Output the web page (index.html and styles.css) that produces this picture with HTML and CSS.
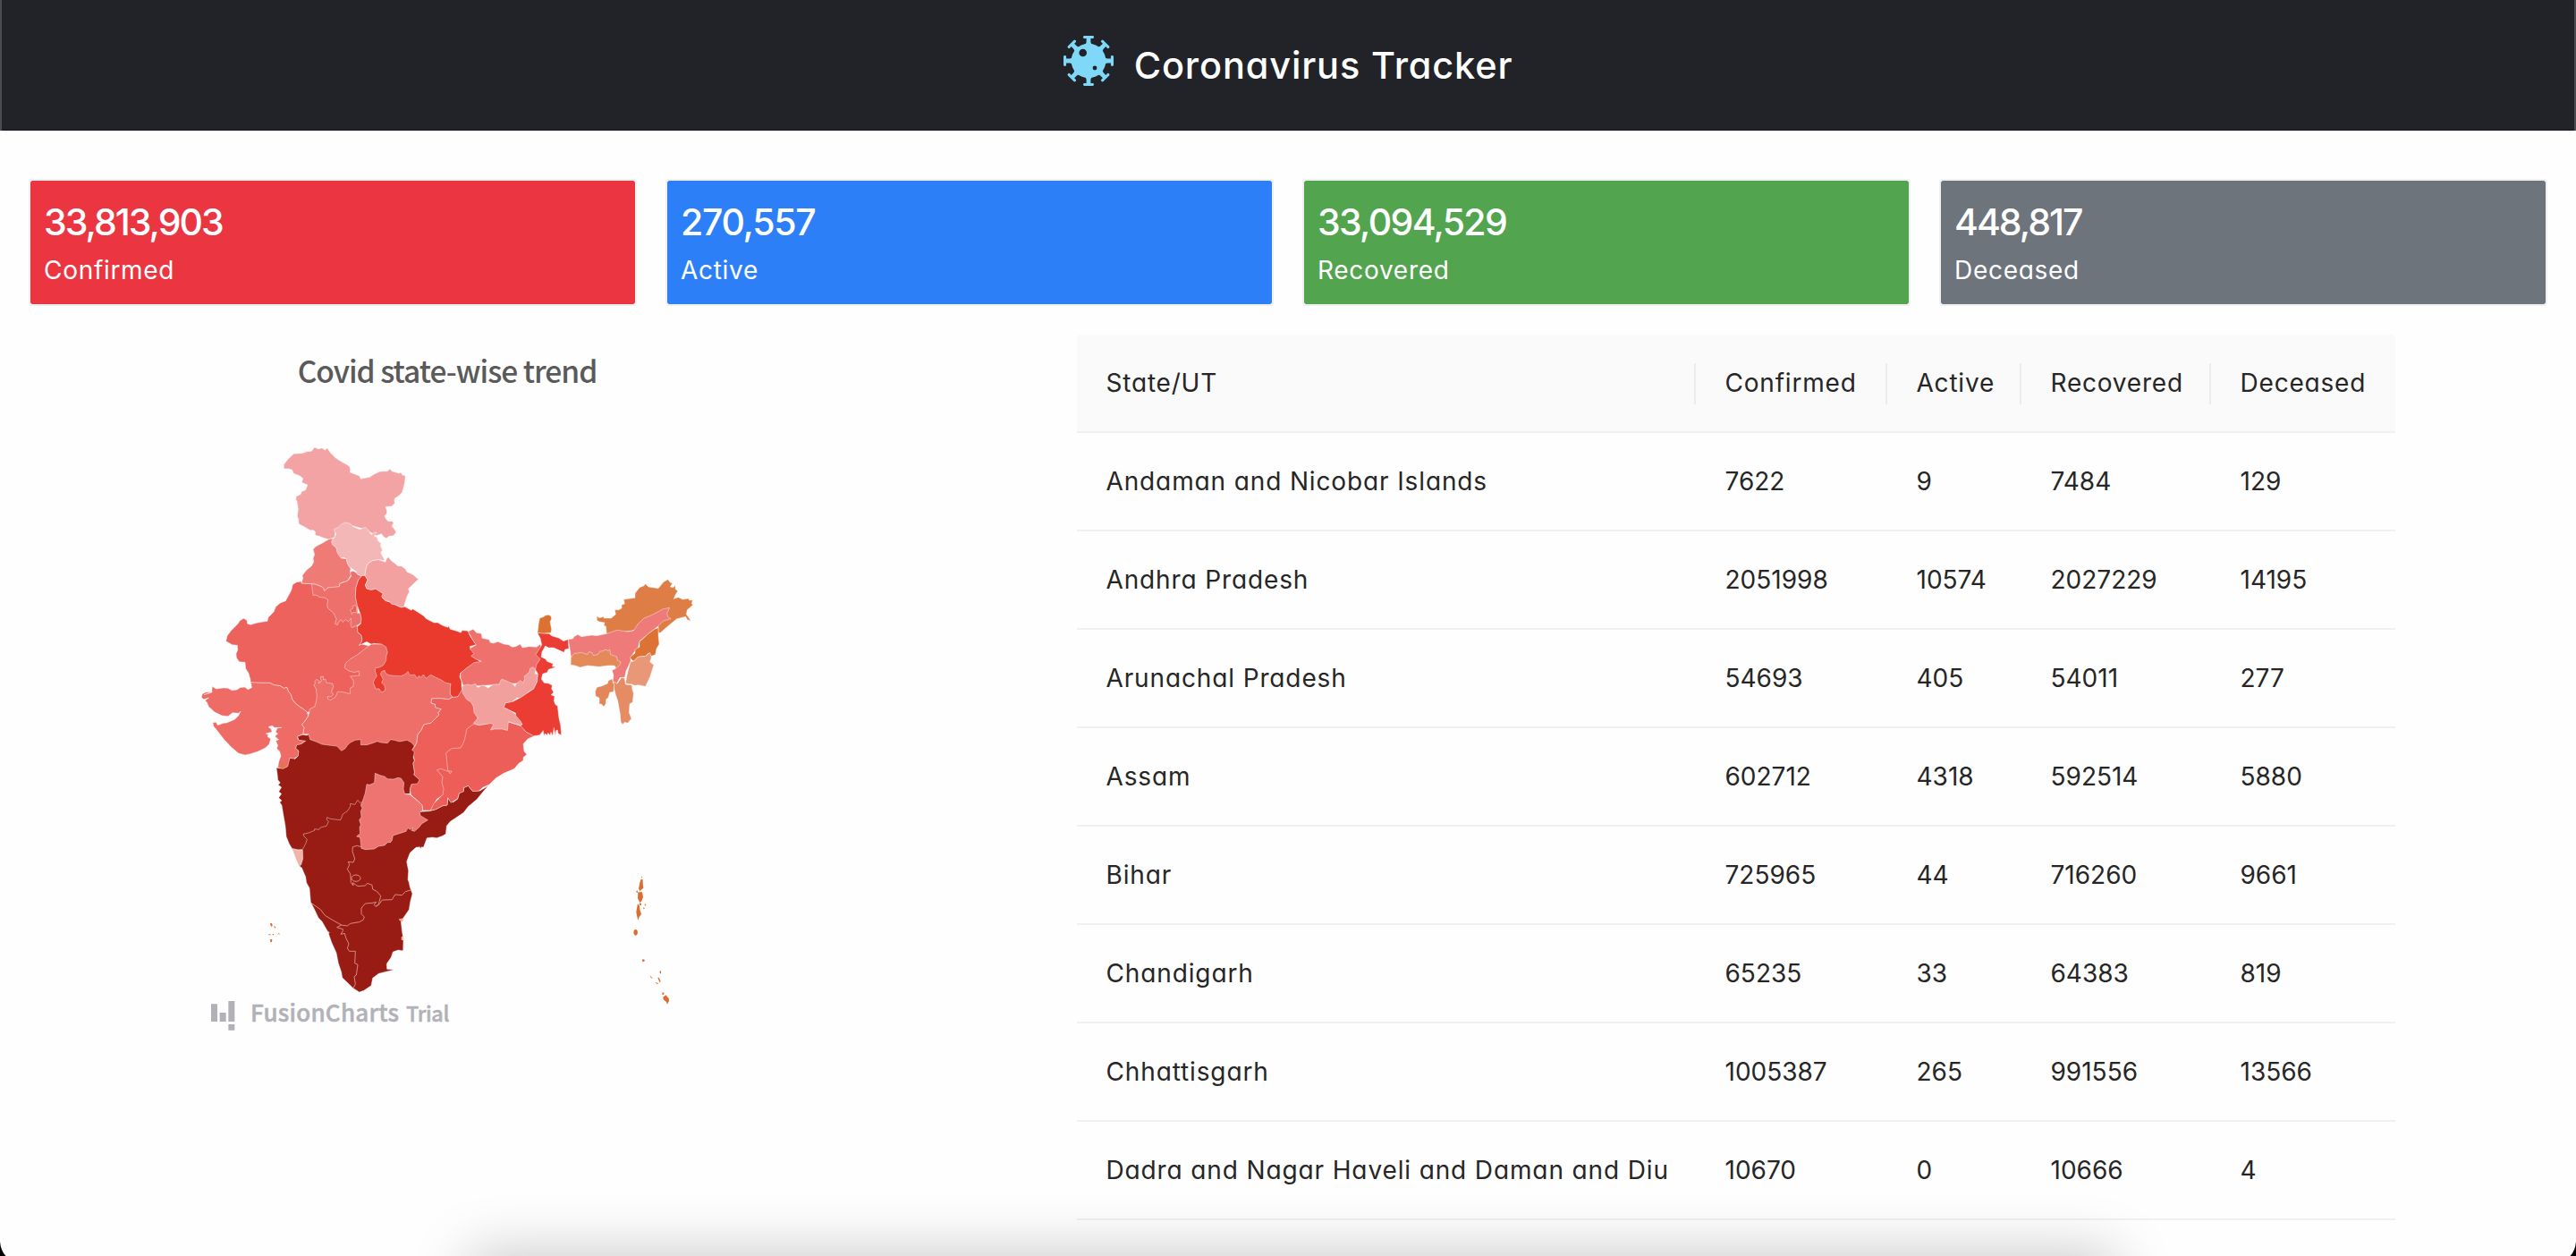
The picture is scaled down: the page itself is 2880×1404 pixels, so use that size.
FILE: index.html
```html
<!DOCTYPE html>
<html lang="en">
<head>
<meta charset="utf-8">
<title>Coronavirus Tracker</title>
<link rel="stylesheet" href="styles.css">
</head>
<body>
<header class="topbar">
  <svg class="logo" viewBox="-28 -28 56 56">
    <defs>
      <path id="spike" d="M-4.6-28h9.2a1.4 1.4 0 0 1 1.4 1.4v.3a1.4 1.4 0 0 1-1.4 1.4H2.4v4Q2.6-18.500 5-17.500h-10Q-2.600-18.500-2.400-20.900v-4h-2.200A1.400 1.400 0 0 1-6-26.300v-.3A1.400 1.400 0 0 1-4.600-28z"/>
      <g id="pair"><use href="#spike"/><use href="#spike" transform="rotate(180)"/></g>
    </defs>
    <g class="virus">
      <use href="#pair"/><use href="#pair" transform="rotate(45)"/><use href="#pair" transform="rotate(90)"/><use href="#pair" transform="rotate(135)"/>
      <circle r="19.300"/>
    </g>
    <circle class="hole" cx="-6.300" cy="-9" r="4.300"/>
    <circle class="hole" cx="7" cy="8" r="2.400"/>
  </svg>
  <h1>Coronavirus Tracker</h1>
</header>

<section class="cards">
  <article class="card confirmed"><strong>33,813,903</strong><span>Confirmed</span></article>
  <article class="card active"><strong>270,557</strong><span>Active</span></article>
  <article class="card recovered"><strong>33,094,529</strong><span>Recovered</span></article>
  <article class="card deceased"><strong>448,817</strong><span>Deceased</span></article>
</section>

<main class="content">
  <section class="chart">
    <h2>Covid state-wise trend</h2>
    <svg class="map" viewBox="0 0 1800 2040">
      <!-- north and west -->
      <g class="state">
        <path fill="#f3a3a3" d="M352,118L366,100 385,82 412,80 428,76 414,68 430,74 445,73 455,60 468,66 480,62 490,70 497,62 508,78 525,95 540,105 556,114 572,124 575,132 574,144 590,150 606,156 610,166 625,163 640,160 655,150 675,141 700,140 708,132 714,140 740,148 744,144 750,153 760,156 757,180 752,200 748,212 735,225 725,230 722,240 725,246 715,257 693,260 698,272 697,283 690,290 694,300 702,308 716,308 720,314 714,325 722,333 729,345 720,356 705,358 696,365 686,360 680,350 662,356 625,335 570,320 525,340 522,362 502,369 485,364 470,358 457,355 458,344 452,338 440,338 420,326 402,317 401,300 397,292 400,268 396,240 392,236 394,224 408,218 412,208 424,204 432,186 412,178 416,164 406,156 385,148 380,136 368,132 352,132Z"/>
        <path fill="#ed625d" d="M411,516L411,510 395,512 382,520 377,540 358,575 340,582 325,595 318,612 300,630 297,643 265,648 240,655 230,652 228,640 217,634 204,642 198,652 175,675 162,692 158,710 178,722 196,724 197,740 192,752 193,765 202,779 222,781 224,802 234,818 240,840 240,848 275,850 305,850 320,857 340,860 352,868 362,865 368,880 375,888 380,905 390,918 405,930 420,940 430,948 640,940 700,740 612,720 605,724 615,708 612,690 600,680 598,662 600,560 445,518Z"/>
        <path fill="#ef7b77" d="M502,369L520,365 512,376 528,397 545,432 562,434 565,448 576,465 574,480 578,488 570,500 566,508 548,513 540,517 538,527 520,531 500,531 490,540 480,528 460,520 445,518 411,516 416,500 414,490 428,472 445,458 452,445 450,432 455,420 450,402 460,392 480,382Z"/>
        <path fill="#ee706c" d="M445,518L460,520 484,530 488,543 500,531 538,527 540,517 566,508 578,492 574,478 585,475 594,480 600,487 613,491 602,505 594,530 592,560 598,590 600,615 608,617 612,632 610,650 598,657 580,665 576,655 578,633 568,645 560,638 550,646 543,638 535,648 532,656 524,652 528,635 518,615 500,600 497,590 500,572 490,565 470,562 462,556 450,556Z"/>
        <path fill="#ef5b56" d="M578,612L575,605 585,600 582,594 590,590 596,594 596,610 600,616 585,612 580,620Z"/>
        <path fill="#f4b7b7" d="M520,335L535,328 545,318 558,312 575,316 585,326 607,335 625,328 634,336 640,345 645,353 655,345 664,345 655,358 665,362 668,374 678,382 676,390 680,398 683,405 677,412 680,420 687,432 690,440 670,437 650,440 636,448 630,458 626,475 624,490 613,491 600,487 594,476 582,468 570,460 565,448 562,434 552,430 545,432 535,420 530,410 528,397 514,386 512,376 520,365 527,352Z"/>
        <path fill="#ee6e69" d="M438,948L438,938 455,930 460,915 463,895 460,870 453,858 458,850 455,845 462,838 472,845 468,852 478,845 475,830 485,828 484,840 492,838 495,850 515,852 518,862 512,880 518,890 510,897 498,896 500,904 508,908 525,898 532,880 548,880 562,884 575,886 574,868 585,862 586,843 575,828 606,825 603,810 590,815 570,810 556,800 558,785 575,770 600,755 625,735 645,720 700,720 912,840 910,888 918,898 905,905 875,902 848,903 846,918 860,922 860,932 880,938 870,950 872,958 855,975 845,985 822,990 812,1010 802,1022 800,1030 798,1050 792,1062 778,1062 600,1072 545,1085 440,1060 434,1022 416,1022 420,1000 412,990 425,975 434,960Z"/>
        <path fill="#ef6b66" d="M240,848L275,850 305,850 320,857 340,860 352,868 362,865 368,880 375,888 380,905 390,918 405,930 420,940 430,948 434,960 425,975 412,990 420,1000 416,1022 398,1030 400,1040 425,1045 410,1055 395,1060 392,1070 402,1078 400,1095 385,1105 372,1102 370,1120 366,1130 348,1140 332,1134 335,1115 342,1095 338,1080 328,1070 332,1060 325,1045 335,1040 322,1030 332,1020 324,1015 330,1002 345,1000 320,1000 314,994 305,996 300,998 310,1005 312,1015 292,1020 300,1023 297,1030 308,1038 303,1055 290,1068 265,1080 240,1088 222,1092 200,1086 175,1065 150,1038 130,1012 116,995 114,983 125,982 130,992 150,985 160,984 175,978 188,972 200,960 207,945 200,952 180,950 165,962 145,960 120,948 100,930 94,915 88,910 100,900 84,905 76,900 78,888 88,882 112,880 84,890 110,882 112,862 125,870 150,867 165,868 178,875 195,873 205,866 220,864 232,872 244,866 243,855Z"/>
        <path fill="#ea392d" d="M613,491L624,490 633,505 625,522 630,534 645,538 660,534 670,541 685,550 682,565 695,575 710,580 725,588 745,597 758,595 780,607 784,602 800,612 820,625 830,635 855,648 868,648 885,658 902,664 905,659 910,670 935,677 946,682 950,674 970,676 975,690 985,705 997,722 975,728 982,738 995,748 990,758 1005,775 1015,780 990,786 965,802 944,818 942,830 948,845 948,860 950,872 945,885 935,897 918,898 910,888 910,865 912,853 895,850 880,840 862,832 845,823 835,830 830,835 820,822 812,832 805,826 800,835 790,822 775,824 768,812 758,822 745,827 720,826 705,824 693,818 690,808 680,812 676,820 685,838 680,850 690,858 692,875 680,882 672,870 660,870 652,850 656,838 664,828 658,810 660,800 672,798 685,792 695,775 696,758 700,748 695,730 680,720 655,718 645,720 630,712 605,724 615,708 612,690 600,680 598,662 610,652 612,632 608,617 598,590 592,560 594,530 602,505Z"/>
        <path fill="#f2a1a0" d="M630,458L636,448 650,440 670,437 693,445 696,434 703,428 712,440 725,450 735,458 745,458 760,468 765,478 785,487 800,500 805,503 798,507 785,520 770,534 773,545 765,560 758,582 755,594 745,596 725,587 715,587 705,577 693,575 680,560 685,550 668,540 660,534 645,538 630,534 625,522 633,505 624,490 626,475Z"/>
        <path fill="#ed5f58" d="M905,905L918,898 935,897 950,872 990,900 1005,985 1000,1150 865,1240 845,1278 818,1278 816,1260 800,1245 778,1225 775,1205 780,1190 805,1175 788,1158 790,1150 785,1120 790,1110 782,1075 792,1062 798,1050 800,1030 802,1022 812,1010 822,990 845,985 855,975 872,958 870,950 880,938 860,932 860,922 846,918 848,903 875,902Z"/>
      </g>

      <!-- south -->
      <g class="state" transform="translate(0 960)">
        <path fill="#981c13" d="M380,446L405,505 412,510 425,540 428,560 438,578 442,625 455,650 468,678 480,690 500,725 512,760 528,795 535,830 545,860 548,878 565,895 585,914 605,927 620,922 645,905 650,880 670,865 700,857 722,852 698,850 697,832 712,810 718,792 735,786 752,788 753,750 748,720 745,690 755,675 772,650 776,625 783,597 775,575 772,560 768,550 770,520 764,490 775,460 795,442 808,440 810,446 814,440 820,442 832,410 850,408 865,410 885,403 895,397 898,370 910,355 955,325 970,305 1000,280 1020,255 1038,235 1010,252 985,253 970,235 955,242 955,252 940,260 935,280 920,290 908,285 902,275 900,300 885,302 860,315 840,320 812,322 700,300 600,200 400,300Z"/>
        <path fill="#981c13" d="M435,62L440,80 460,87 480,96 510,100 530,102 545,118 558,110 565,100 575,90 592,82 610,80 610,98 630,98 650,92 665,86 678,90 700,92 710,80 722,82 740,87 765,82 780,90 790,102 782,115 790,122 786,140 790,150 785,160 790,190 788,198 807,215 800,228 780,230 775,245 775,262 757,262 640,300 615,290 607,292 600,283 590,298 575,295 575,305 565,320 550,330 542,350 525,348 508,346 497,341 495,348 502,355 495,370 475,375 470,382 455,380 455,385 435,393 417,397 420,405 430,415 425,430 415,448 400,450 380,446 370,430 360,405 357,370 350,330 345,300 338,290 345,285 335,275 344,262 335,255 344,240 333,232 340,225 332,215 330,195 327,175 350,178 365,170 372,142 390,145 400,135 402,118 392,110 395,98 410,95 425,85 402,82 398,70 415,64 430,66Z"/>
        <path fill="#ed7471" d="M658,193L675,200 690,204 700,212 720,213 735,208 745,210 755,225 753,245 757,262 775,265 800,285 816,300 818,318 808,325 810,335 835,350 815,362 805,375 790,388 780,385 786,376 775,382 768,376 762,388 740,395 718,402 715,418 710,425 700,425 690,435 670,438 655,447 625,449 612,445 608,408 596,405 608,395 606,375 610,365 605,350 612,340 610,320 615,310 610,300 615,290 625,260 630,230 640,232 656,225Z"/>
        <path fill="#f3b4a8" d="M380,446L400,450 415,450 416,480 410,500 403,505 390,475Z"/>
        <path class="line" d="M612,440L598,436 583,440 582,455 590,480 585,492 568,490 572,500 565,515 575,530 577,560 585,570 583,560 600,572 625,570 632,562 648,568 650,582 665,590 677,605 670,632 660,640 655,634 662,625 648,628 625,630 612,645 612,665 622,675 618,685 605,692 575,697 565,705 545,702 515,685 490,670 475,650 442,627M662,640L672,632 682,618 715,617 725,600 748,602 760,590 777,585M545,702L530,710 550,716 550,722 543,733 556,730 560,745 570,765 565,780 572,790 592,790 590,830 600,835 595,870 588,875 592,900 585,914"/>
        <ellipse class="line" cx="594" cy="545" rx="15" ry="11"/>
        <path fill="#f3a38c" d="M738,683L754,680 750,693Z M747,742h5v10h-5z M499,723l6,4-3,5z"/>
        <circle fill="#dc7b35" cx="349" cy="168" r="7"/>
      </g>

      <!-- east and north-east -->
      <g class="state" transform="translate(840 420)">
        <path fill="#ec5e57" d="M148,568L165,572 190,568 208,560 262,560 310,575 325,595 352,608 330,618 315,635 318,660 327,670 315,680 315,690 300,700 285,718 250,733 225,748 200,772 180,780 165,793 145,793 130,775 115,782 115,795 100,800 95,818 72,832 62,815 60,840 45,842 20,855 3,858 15,835 45,805 48,785 42,765 45,745 36,735 25,722 40,718 60,726 75,726 70,735 62,722 60,705 56,665 75,650 105,648 115,630 122,605 125,585Z"/>
        <path fill="#ee716e" d="M130,258L147,250 158,262 175,265 177,280 200,285 205,295 215,297 230,292 250,300 265,302 278,310 290,308 305,300 312,312 335,308 360,310 372,300 376,312 372,325 360,335 374,350 364,368 362,390 335,395 320,430 115,443 105,415 104,398 125,380 150,362 175,358 155,350 140,340 150,332 135,315 157,303 145,285Z"/>
        <path fill="#f2a09e" d="M110,440L130,435 140,438 155,433 160,444 165,445 175,438 185,440 197,447 215,435 235,435 240,420 245,418 262,425 278,432 288,442 290,435 305,422 315,430 320,415 318,408 335,395 338,382 347,377 356,385 354,400 364,400 362,425 350,450 335,458 325,468 305,480 295,480 275,495 255,498 250,512 270,522 290,535 310,555 310,573 290,568 265,560 262,590 245,585 220,585 205,588 215,570 208,566 190,568 165,572 148,565 163,548 150,530 148,510 140,495 125,485 112,465Z"/>
        <path fill="#eb3d33" d="M362,262L385,264 402,265 410,272 435,280 450,290 465,284 468,315 455,318 452,328 430,318 418,312 400,312 389,306 378,326 375,343 390,350 395,358 415,366 412,375 425,377 400,385 395,395 380,400 376,418 385,430 400,432 412,438 410,450 417,462 408,470 420,475 418,490 422,502 430,508 435,550 440,570 443,605 432,600 430,588 425,590 423,608 418,580 414,608 408,595 405,606 398,598 395,605 388,600 384,608 382,590 370,605 350,608 325,595 305,573 312,570 306,558 290,540 290,532 270,522 250,512 255,498 280,493 305,480 350,450 362,425 364,400 356,385 360,368 372,350 357,335 372,312 377,302 372,280Z"/>
        <path fill="#dc7232" d="M370,213L385,208 388,204 400,202 408,206 410,215 405,225 410,250 408,262 385,264 363,262 366,235Z"/>
        <path fill="#de7d45" d="M562,205L570,212 585,208 585,213 610,213 625,200 622,185 635,185 645,180 645,168 655,165 652,150 690,145 690,130 705,110 720,104 725,98 735,108 768,113 785,92 800,83 807,92 815,97 808,108 818,110 825,103 825,115 833,122 825,135 820,148 835,143 850,150 870,147 872,153 883,152 880,165 885,168 865,185 862,200 878,222 865,218 860,208 830,215 800,240 775,262 768,262 768,240 700,250 680,255 595,266 592,240 585,238 588,228 570,225 562,220Z"/>
        <path fill="#ee7b7a" d="M466,284L482,282 485,275 498,268 510,275 545,270 560,272 595,265 630,253 665,258 685,255 700,232 720,213 745,203 770,190 785,182 805,178 802,188 797,195 800,208 810,215 785,222 765,242 735,265 705,290 700,315 688,325 675,345 675,358 660,390 655,412 640,412 628,433 615,425 618,405 613,388 625,382 620,345 476,350 472,320Z"/>
        <path fill="#e3895a" d="M475,345L485,332 510,328 530,335 535,326 545,328 550,338 565,335 572,325 585,322 588,318 600,322 605,318 608,335 628,342 632,355 642,360 640,368 628,380 620,372 600,372 570,376 530,372 505,378 490,372 474,370Z"/>
        <path fill="#dc7234" d="M768,245L768,270 771,300 762,315 758,335 745,340 735,330 725,340 700,343 685,358 672,345 690,330 690,318 705,310 705,292 735,265 755,250Z"/>
        <path fill="#e89777" d="M675,358L685,358 700,343 725,340 740,328 745,345 740,360 753,370 740,410 725,442 700,437 690,439 680,435 658,432 665,395Z"/>
        <path fill="#e58c65" d="M618,425L630,433 645,412 655,415 658,435 680,438 680,450 685,465 682,495 672,500 670,530 678,550 665,565 655,562 648,570 642,560 640,535 632,490 625,470 620,450Z"/>
        <path fill="#e3875a" d="M613,416L616,430 620,436 618,460 605,462 600,480 593,485 592,500 585,510 578,502 570,500 570,480 558,475 556,460 562,445 580,440 598,432 600,423Z"/>
      </g>

      <!-- islands -->
      <g class="islands">
        <g transform="translate(1470 1440)">
          <path d="M81,58l3,3-2,5zM80,68L86,70 86,82 88,98 80,104 76,108 72,100 76,80ZM70,112L84,112 87,128 82,142 76,147 69,132ZM69,150L75,158 76,170 81,185 74,195 70,206 66,190 64,178ZM75,148l6,2-1,7-5-2zM63,110l5-5 1,10zM92,150l5,4-4,5zM88,162l5,6-5,1zM110,390l5,7 6,4-8-2zM143,376h4v9h-4zM136,398l5,2 5,12-4,2zM128,414l10,3-3,4zM152,448l6,1-2,7-5-1zM154,464L163,457 173,468 174,476 168,488 165,480 155,472Z"/>
          <ellipse cx="62" cy="247" rx="6.500" ry="10"/><circle cx="88" cy="341" r="4"/>
        </g>
        <g transform="translate(0 960)">
          <path d="M306,696h6l2,8-5,4zM318,706l7,2-3,5zM301,733h6v3h-6zM314,732h4v4h-4zM333,728l5,4-2,4zM306,750h7l-1,9-5,1z"/>
        </g>
      </g>

      <!-- watermark -->
      <g class="watermark">
        <path d="M108,1927h21v59h-21zM137,1956h21v30h-21zM166,1917h21v69h-21zM166,1995h21v20h-21z"/>
        <text class="brand" x="240" y="1985" textLength="498">FusionCharts</text>
        <text class="trial" x="762" y="1987" textLength="145">Trial</text>
      </g>
    </svg>
  </section>

  <table class="states">
    <colgroup><col class="c1"><col class="c2"><col class="c3"><col class="c4"><col class="c5"></colgroup>
    <thead><tr><th>State/UT</th><th>Confirmed</th><th>Active</th><th>Recovered</th><th>Deceased</th></tr></thead>
    <tbody>
      <tr><td>Andaman and Nicobar Islands</td><td>7622</td><td>9</td><td>7484</td><td>129</td></tr>
      <tr><td>Andhra Pradesh</td><td>2051998</td><td>10574</td><td>2027229</td><td>14195</td></tr>
      <tr><td>Arunachal Pradesh</td><td>54693</td><td>405</td><td>54011</td><td>277</td></tr>
      <tr><td>Assam</td><td>602712</td><td>4318</td><td>592514</td><td>5880</td></tr>
      <tr><td>Bihar</td><td>725965</td><td>44</td><td>716260</td><td>9661</td></tr>
      <tr><td>Chandigarh</td><td>65235</td><td>33</td><td>64383</td><td>819</td></tr>
      <tr><td>Chhattisgarh</td><td>1005387</td><td>265</td><td>991556</td><td>13566</td></tr>
      <tr><td>Dadra and Nagar Haveli and Daman and Diu</td><td>10670</td><td>0</td><td>10666</td><td>4</td></tr>
    </tbody>
  </table>
</main>

<div class="dock-shadow"></div>
<svg class="corner left" viewBox="0 0 8 16"><path d="M0 0Q.8 10 6.500 16H0z"/></svg>
<svg class="corner right" viewBox="0 0 8 16"><path d="M8 0Q7.200 10 1.500 16H8z"/></svg>
</body>
</html>
```
FILE: styles.css
```css
* { box-sizing: border-box; }
html, body { height: 100%; overflow: hidden; }
body {
  margin: 0;
  background: #fefefe;
  color: #262626;
  font-family: Inter, "Open Sans", sans-serif;
  font-size: 28px;
  font-feature-settings: "cv11";
}

.topbar {
  height: 146px;
  display: flex;
  align-items: center;
  justify-content: center;
  gap: 23px;
  background: #222328;
  border: solid #4b4c51;
  border-width: 0 2px;
  box-shadow: inset 0 -1px #1d141b;
}
.logo { width: 56px; height: 56px; margin-bottom: 10px; }
.virus { fill: #7fd8f7; }
.hole { fill: #222328; }
.topbar h1 {
  margin: 0;
  color: #fff;
  font-size: 41.5px;
  font-weight: 500;
  line-height: 64px;
  letter-spacing: 0.85px;
}

.cards {
  display: grid;
  grid-template-columns: repeat(4, 1fr);
  gap: 32px;
  padding: 54px 32px 32px;
}
.card {
  height: 142px;
  display: flex;
  flex-direction: column;
  padding: 14px 15px;
  border: 2px solid #f0f0f0;
  border-radius: 4px;
  background-clip: padding-box;
  color: #fff;
}
.card strong { font-size: 41px; line-height: 64px; font-weight: 500; letter-spacing: -2px; }
.card span { line-height: 44px; letter-spacing: 0.7px; }
.confirmed { background-color: #eb3541; }
.active { background-color: #2d7ff7; }
.recovered { background-color: #52a44f; }
.deceased { background-color: #6d747c; }
.active strong { letter-spacing: -1.3px; }
.recovered strong { letter-spacing: -1.7px; }

.content {
  display: grid;
  grid-template-columns: 936px 1474px;
  column-gap: 236px;
  padding-left: 32px;
  align-items: start;
}
.chart h2 {
  margin: 16px 0 0;
  height: 50px;
  color: #5a5a5a;
  text-align: center;
  font: 500 33.5px/48px "Noto Sans CJK SC", "Noto Sans", sans-serif;
  letter-spacing: -1px;
}
.map { display: block; width: 600px; height: 680px; margin: 40px 0 0 168px; }
.state path { stroke: rgba(255, 255, 255, 0.5); stroke-width: 2.5; stroke-linejoin: round; }
.state .line { fill: none; stroke: #dfa09b; stroke-width: 2.5; }
.islands { fill: #dc6c2f; }
.watermark { fill: #b1b2b8; font-family: "Noto Sans CJK SC", "Noto Sans", sans-serif; }
.watermark text { font-weight: 500; stroke: #b1b2b8; stroke-width: 1.5; }
.brand { font-size: 78px; }
.trial { font-size: 70px; }

.states { width: 1474px; table-layout: fixed; border-collapse: separate; border-spacing: 0; }
.c1 { width: 692px; }
.c2 { width: 214px; }
.c3 { width: 150px; }
.c4 { width: 212px; }
.c5 { width: 206px; }
.states th, .states td {
  height: 110px;
  padding: 0 0 0 32.5px;
  border-bottom: 2px solid #f0f0f0;
  text-align: left;
  font-weight: 400;
  white-space: nowrap;
}
.states th { position: relative; background: #fafafa; letter-spacing: 0.8px; }
.states th:first-child { border-top-left-radius: 4px; }
.states th:last-child { border-top-right-radius: 4px; }
.states th:not(:last-child)::after {
  content: "";
  position: absolute;
  top: 32px;
  right: 0;
  width: 2px;
  height: 46px;
  background: #ececec;
}
.states td:first-child { letter-spacing: 0.87px; }

.dock-shadow {
  position: fixed;
  left: 524px;
  right: 514px;
  bottom: -100px;
  height: 100px;
  box-shadow: 0 -4px 64px rgba(0, 0, 0, 0.21);
  pointer-events: none;
}
.corner { position: fixed; bottom: 0; width: 8px; height: 16px; }
.left { left: 0; }
.right { right: 0; }
```
